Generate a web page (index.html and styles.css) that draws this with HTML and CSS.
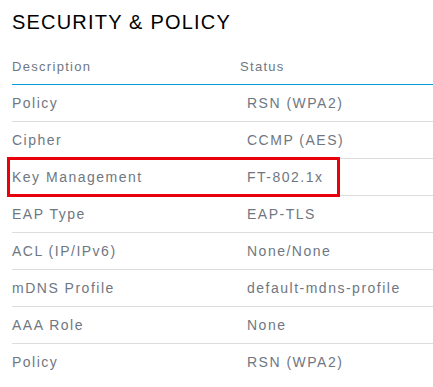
FILE: index.html
```html
<!DOCTYPE html>
<html>
<head>
<meta charset="utf-8">
<link rel="stylesheet" href="styles.css">
</head>
<body>
<div class="panel">
  <h1 class="title">SECURITY &amp; POLICY</h1>
  <div class="table">
    <div class="row head"><div class="desc">Description</div><div class="stat">Status</div></div>
    <div class="row"><div class="desc">Policy</div><div class="stat val">RSN (WPA2)</div></div>
    <div class="row"><div class="desc">Cipher</div><div class="stat val">CCMP (AES)</div></div>
    <div class="row marked"><div class="desc">Key Management</div><div class="stat val">FT-802.1x</div><span class="highlight"></span></div>
    <div class="row"><div class="desc">EAP Type</div><div class="stat val">EAP-TLS</div></div>
    <div class="row"><div class="desc">ACL (IP/IPv6)</div><div class="stat val">None/None</div></div>
    <div class="row"><div class="desc">mDNS Profile</div><div class="stat val">default-mdns-profile</div></div>
    <div class="row"><div class="desc">AAA Role</div><div class="stat val">None</div></div>
    <div class="row last"><div class="desc">Policy</div><div class="stat val">RSN (WPA2)</div></div>
  </div>
</div>
</body>
</html>
```
FILE: styles.css
```css
html, body {
  margin: 0;
  padding: 0;
  background: #ffffff;
}
body {
  font-family: "Liberation Sans", Arial, sans-serif;
}
.panel {
  padding: 10px 0 0 12px;
}
.title {
  margin: 0;
  font-size: 20px;
  line-height: 24px;
  font-weight: 400;
  letter-spacing: 1.2px;
  color: #000000;
}
.table {
  margin-top: 14px;
}
.row {
  display: grid;
  grid-template-columns: 228px 1fr;
  height: 36px;
  align-items: center;
  border-bottom: 1px solid #dddddd;
  font-size: 14px;
  letter-spacing: 1.5px;
  color: #6f7782;
}
.row.head {
  font-size: 13px;
  letter-spacing: 1.3px;
  border-bottom: 1px solid #049fd9;
}
.row.last {
  border-bottom: none;
}
.val {
  padding-left: 7px;
}
.marked {
  position: relative;
}
.highlight {
  position: absolute;
  left: -5px;
  top: -2px;
  width: 327px;
  height: 34px;
  border: 3px solid #e8000b;
}
```
